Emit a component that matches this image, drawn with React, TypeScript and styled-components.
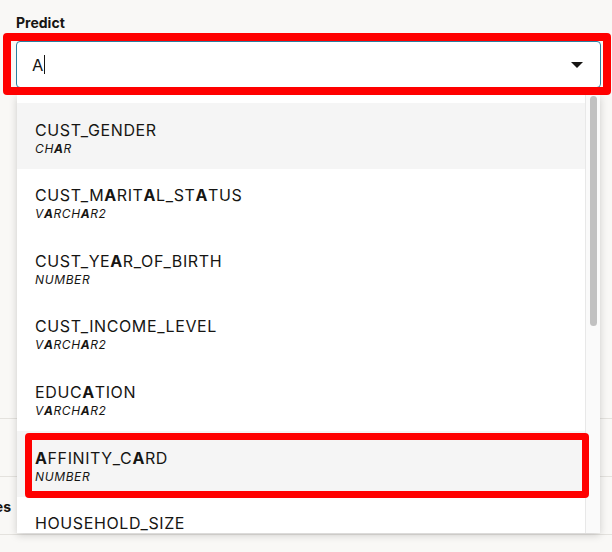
import styled, { createGlobalStyle } from "styled-components";

const GlobalStyle = createGlobalStyle`
  html, body {
    margin: 0;
    padding: 0;
    background: #f9f8f6;
  }
  body {
    font-family: Inter, "Noto Sans", sans-serif;
    color: #161513;
  }
`;

type Column = { name: string; type: string };

const columns: Column[] = [
  { name: "CUST_GENDER", type: "CHAR" },
  { name: "CUST_MARITAL_STATUS", type: "VARCHAR2" },
  { name: "CUST_YEAR_OF_BIRTH", type: "NUMBER" },
  { name: "CUST_INCOME_LEVEL", type: "VARCHAR2" },
  { name: "EDUCATION", type: "VARCHAR2" },
  { name: "AFFINITY_CARD", type: "NUMBER" },
  { name: "HOUSEHOLD_SIZE", type: "NUMBER" },
];

const query = "A";

// bolds every letter that matches the typed search text
const Highlight = ({ text }: { text: string }) => (
  <>
    {text.split("").map((ch, i) =>
      ch === query ? <b key={i}>{ch}</b> : <span key={i}>{ch}</span>
    )}
  </>
);

const App = (): JSX.Element => {
  return (
    <Page>
      <GlobalStyle />
      <Field>
        <Label>Predict</Label>
        <Input>
          <Value>{query}</Value>
          <Caret />
          <Spacer />
          <svg width="12" height="6" viewBox="0 0 12 6">
            <polygon points="0,0 12,0 6,6" fill="#161513" />
          </svg>
        </Input>
      </Field>

      <Behind>
        <BackRow />
        <BackRow>
          <BackLabel>Features</BackLabel>
        </BackRow>
        <BackRow />
      </Behind>

      <Dropdown>
        <List>
          {columns.map((c) => (
            <Item key={c.name} $active={c.name === "CUST_GENDER" || c.name === "AFFINITY_CARD"}>
              <Name>
                <Highlight text={c.name} />
              </Name>
              <Type>
                <Highlight text={c.type} />
              </Type>
            </Item>
          ))}
        </List>
        <Track>
          <Thumb />
        </Track>
      </Dropdown>

      <Mark $left={3} $top={33} $width={608} $height={62} $border={8} />
      <Mark $left={25} $top={433} $width={564} $height={65} $border={7} />
    </Page>
  );
};

export default App;

const Page = styled.div`
  position: relative;
  width: 612px;
  height: 552px;
  overflow: hidden;
`;

const Field = styled.div`
  display: flex;
  flex-direction: column;
  gap: 9px;
  padding: 14px 11px 0 16px;
`;

const Label = styled.div`
  font-size: 14px;
  line-height: 18px;
  font-weight: 700;
`;

const Input = styled.div`
  display: flex;
  align-items: center;
  box-sizing: border-box;
  height: 47px;
  padding: 0 17px 0 15px;
  background: #fff;
  border: 1px solid #2a7ea0;
  border-radius: 4px;
  > svg {
    margin-top: 1px;
  }
`;

const Value = styled.span`
  font-size: 16.5px;
  line-height: 20px;
  color: #161513;
`;

const Caret = styled.span`
  width: 1px;
  height: 19px;
  margin-left: 1px;
  background: #161513;
`;

const Spacer = styled.div`
  flex: 1;
`;

const Behind = styled.div`
  display: flex;
  flex-direction: column;
  margin-top: 330px;
`;

const BackRow = styled.div`
  display: flex;
  align-items: center;
  height: 57px;
  border-top: 1px solid #e4e2de;
`;

const BackLabel = styled.div`
  display: flex;
  justify-content: flex-end;
  width: 11px;
  white-space: nowrap;
  font-size: 14px;
  font-weight: 700;
  margin-top: 2px;
`;

const Dropdown = styled.div`
  position: absolute;
  left: 17px;
  top: 95px;
  width: 583px;
  height: 438px;
  display: flex;
  background: #fff;
  box-shadow: 0 2px 8px rgba(0, 0, 0, 0.18);
  overflow: hidden;
`;

const List = styled.div`
  flex: 1;
  padding-top: 8px;
`;

const Item = styled.div<{ $active?: boolean }>`
  box-sizing: border-box;
  height: 65.67px;
  padding: 16.5px 0 0 18px;
  background: ${(p) => (p.$active ? "#f5f5f5" : "#fff")};
`;

const Name = styled.div`
  font-size: 16px;
  line-height: 20px;
  letter-spacing: 0.6px;
  b {
    font-weight: 700;
  }
`;

const Type = styled.div`
  margin-top: 2px;
  font-size: 12px;
  line-height: 14px;
  letter-spacing: 0.6px;
  font-style: italic;
  b {
    font-weight: 700;
  }
`;

const Track = styled.div`
  width: 15px;
  box-sizing: border-box;
  padding: 1px 3px 0 4px;
  background: #fafafa;
  border-left: 1px solid #e8e8e8;
`;

const Thumb = styled.div`
  height: 230px;
  border-radius: 4px;
  background: #c1c1c1;
`;

const Mark = styled.div<{ $left: number; $top: number; $width: number; $height: number; $border: number }>`
  position: absolute;
  left: ${(p) => p.$left}px;
  top: ${(p) => p.$top}px;
  width: ${(p) => p.$width}px;
  height: ${(p) => p.$height}px;
  box-sizing: border-box;
  border: ${(p) => p.$border}px solid #ff0000;
  border-radius: 4px;
  pointer-events: none;
`;
